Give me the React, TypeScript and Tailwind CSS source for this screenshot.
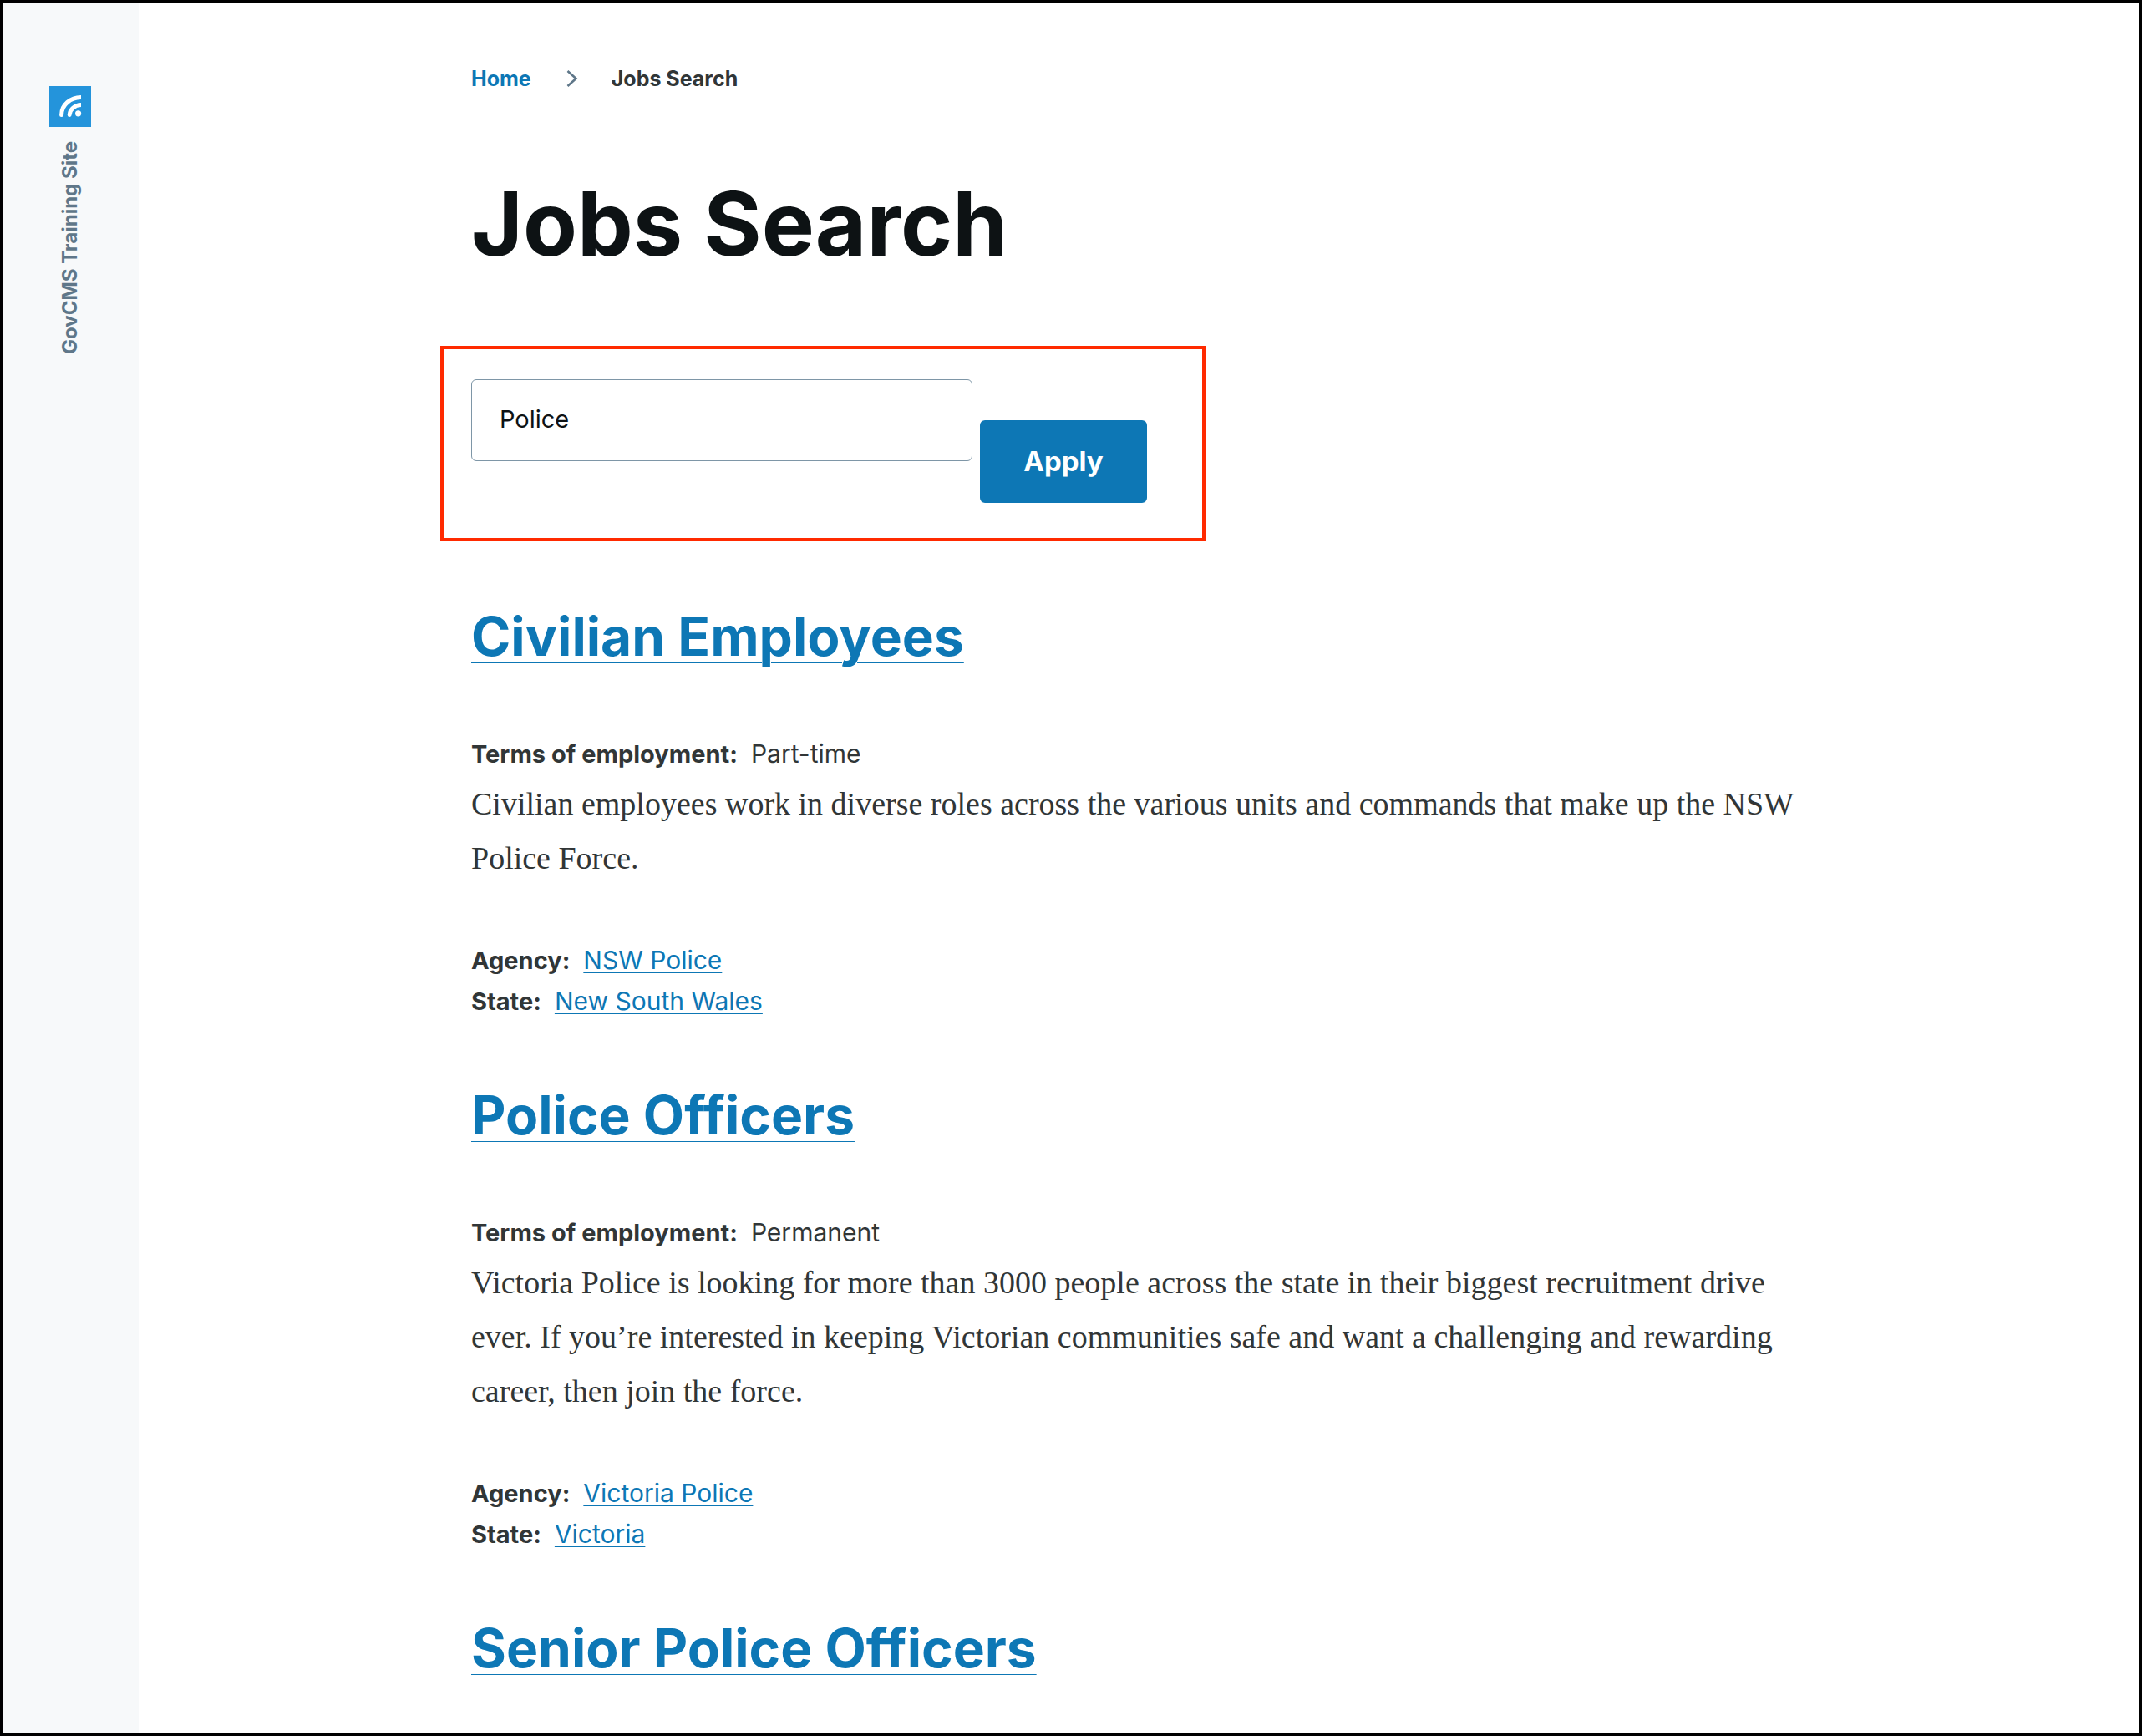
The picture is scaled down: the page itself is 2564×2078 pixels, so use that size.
type Job = {
  title: string;
  terms?: string;
  summary?: string;
  agency?: string;
  state?: string;
};

const jobs: Job[] = [
  {
    title: "Civilian Employees",
    terms: "Part-time",
    summary:
      "Civilian employees work in diverse roles across the various units and commands that make up the NSW Police Force.",
    agency: "NSW Police",
    state: "New South Wales",
  },
  {
    title: "Police Officers",
    terms: "Permanent",
    summary:
      "Victoria Police is looking for more than 3000 people across the state in their biggest recruitment drive ever. If you’re interested in keeping Victorian communities safe and want a challenging and rewarding career, then join the force.",
    agency: "Victoria Police",
    state: "Victoria",
  },
  { title: "Senior Police Officers" },
];

function Sidebar() {
  return (
    <aside className="flex w-[162px] shrink-0 flex-col items-center bg-[#f7f9fa] pt-[99px] pr-[2px]">
      <a href="#" aria-label="Site logo" className="block bg-[#2494db]">
        <svg width="50" height="49" viewBox="0 0 50 49" fill="none">
          <defs>
            <clipPath id="logo-edge">
              <rect x="0" y="0" width="38" height="49" />
            </clipPath>
          </defs>
          <g clipPath="url(#logo-edge)" stroke="#fff" strokeWidth="5" strokeLinecap="round">
            <path d="M14.6 34.4C14.6 22.5 25 13.5 39 13.5" />
            <path d="M24.2 34.4C24.6 28 30 22.6 39 22.6" />
          </g>
          <circle cx="34.6" cy="32.8" r="3.6" fill="#fff" />
        </svg>
      </a>
      <a
        href="#"
        className="mt-[17px] rotate-180 whitespace-nowrap text-[24px] leading-[32px] font-bold text-[#5f7789] [writing-mode:vertical-rl]"
      >
        GovCMS Training Site
      </a>
    </aside>
  );
}

function Field({ label, value, link }: { label: string; value: string; link?: boolean }) {
  return (
    <div className="flex items-baseline gap-4 leading-[49px]">
      <span className="text-[29px] font-bold">{label}:</span>
      {link ? (
        <a
          href="#"
          className="text-[30px] leading-[49px] text-[#0d77b5] underline decoration-1 underline-offset-[4px]"
        >
          {value}
        </a>
      ) : (
        <span className="text-[30px] leading-[49px]">{value}</span>
      )}
    </div>
  );
}

function JobItem({ job }: { job: Job }) {
  return (
    <article className="mt-[72px]">
      <h2 className="text-[64px] leading-[80px] font-bold">
        <a href="#" className="text-[#0d77b5] underline decoration-1 underline-offset-[8px]">
          {job.title}
        </a>
      </h2>
      {job.terms && (
        <div className="mt-[76px]">
          <Field label="Terms of employment" value={job.terms} />
        </div>
      )}
      {job.summary && (
        <p className="mt-[3px] font-['Liberation_Serif',serif] text-[38px] leading-[65px]">{job.summary}</p>
      )}
      {job.agency && job.state && (
        <div className="mt-[65px]">
          <Field label="Agency" value={job.agency} link />
          <Field label="State" value={job.state} link />
        </div>
      )}
    </article>
  );
}

export default function App() {
  return (
    <div className="flex min-h-screen border-4 border-black bg-white font-['Inter',sans-serif] text-[#313637]">
      <Sidebar />
      <main className="ml-[398px] min-w-0 max-w-[1600px] flex-1 pt-[72px] pb-12">
        <nav aria-label="Breadcrumb">
          <ol className="flex items-center text-[25px] leading-[36px] font-bold">
            <li>
              <a href="#" className="text-[#0d77b5]">
                Home
              </a>
            </li>
            <li aria-hidden="true" className="mr-[40px] ml-[42px]">
              <svg width="14" height="20" viewBox="0 0 14 20" fill="none" stroke="#5f7789" strokeWidth="2.6">
                <path d="M1.5 1L11.5 10L1.5 19" />
              </svg>
            </li>
            <li aria-current="page">Jobs Search</li>
          </ol>
        </nav>

        <h1 className="mt-[96px] text-[106px] leading-[120px] font-bold text-[#0d1214]">Jobs Search</h1>

        <form
          className="mt-[86px] mb-[74px] -ml-[37px] flex h-[234px] w-[916px] items-start gap-[9px] border-4 border-[#ff2a00] pt-[36px] pl-[33px]"
          onSubmit={(e) => e.preventDefault()}
        >
          <input
            type="text"
            aria-label="Search jobs"
            defaultValue="Police"
            className="h-[98px] w-[600px] rounded-md border border-[#7e96a7] bg-white px-[33px] pb-1 text-[29px] text-[#0d1214]"
          />
          <button
            type="submit"
            className="mt-[49px] h-[99px] w-[200px] rounded-md bg-[#0d77b5] text-[33px] font-bold text-white"
          >
            Apply
          </button>
        </form>

        {jobs.map((job) => (
          <JobItem key={job.title} job={job} />
        ))}
      </main>
    </div>
  );
}
